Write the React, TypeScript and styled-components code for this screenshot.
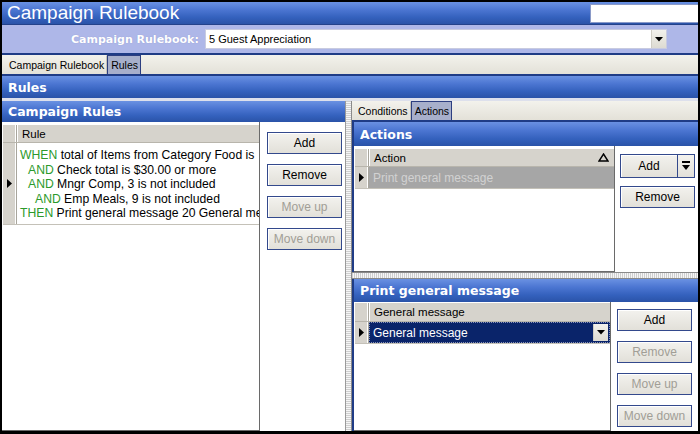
import React from 'react';
import styled, { createGlobalStyle } from 'styled-components';

const GlobalStyle = createGlobalStyle`
  html, body {
    margin: 0;
    padding: 0;
    background: #000;
  }
  * {
    box-sizing: border-box;
  }
`;

const Frame = styled.div`
  width: 700px;
  height: 434px;
  border: 2px solid #000;
  border-bottom-width: 3px;
  background: #fff;
  display: flex;
  flex-direction: column;
  overflow: hidden;
  font-family: 'Liberation Sans', Arial, sans-serif;
  font-size: 12px;
  color: #000;
`;

const blueBar = `
  background: linear-gradient(to bottom, #6a91e2 0%, #4c76d2 35%, #3461bd 70%, #2a53a8 100%);
  color: #fff;
`;

const TitleBar = styled.div`
  ${blueBar}
  height: 23px;
  display: flex;
  align-items: center;
  justify-content: space-between;
  padding-left: 5px;
  border-bottom: 1px solid #23428a;
`;

const TitleText = styled.span`
  font-size: 19px;
`;

const TitleBox = styled.div`
  width: 108px;
  height: 19px;
  background: #fff;
  border: 1px solid #8a9ac8;
  border-right: none;
`;

const LabelBand = styled.div`
  height: 30px;
  background: #aeb7e8;
  display: flex;
  align-items: center;
  padding-left: 69px;
  border-bottom: 2px solid #1f3c86;
`;

const BandLabel = styled.span`
  font-family: 'DejaVu Sans', Verdana, sans-serif;
  font-weight: bold;
  font-size: 11px;
  color: #fff;
  text-shadow: 0 0 1px #8a94c8;
  width: 134px;
`;

const Combo = styled.div`
  width: 462px;
  height: 20px;
  background: #fff;
  border: 1px solid #c8cbe0;
  display: flex;
  align-items: center;
  justify-content: space-between;
  padding-left: 3px;
  font-size: 11px;
`;

const DropButton = styled.div`
  width: 15px;
  height: 100%;
  background: linear-gradient(to bottom, #f2f1ec, #dddbd2);
  border-left: 1px solid #cfcdc4;
  display: flex;
  align-items: center;
  justify-content: center;
`;

const TabStrip = styled.div<{ $inset?: number }>`
  height: 21px;
  flex: 0 0 21px;
  background: linear-gradient(to bottom, #f3f2ec, #e3e1d8);
  display: flex;
  align-items: flex-end;
  padding-left: ${(p) => p.$inset ?? 3}px;
  border-bottom: 2px solid #1f3c86;
`;

const Tab = styled.div<{ $active?: boolean }>`
  height: 19px;
  display: flex;
  align-items: center;
  padding: 0 2px 0 3px;
  font-size: 10.5px;
  background: ${(p) => (p.$active ? '#a7afcb' : 'transparent')};
  border: 1px solid ${(p) => (p.$active ? '#2c3e80' : 'transparent')};
  border-bottom: none;
  border-right: 1px solid ${(p) => (p.$active ? '#2c3e80' : '#c4c2b8')};
`;

const SectionHeader = styled.div<{ $h: number }>`
  ${blueBar}
  height: ${(p) => p.$h}px;
  flex: 0 0 ${(p) => p.$h}px;
  display: flex;
  align-items: center;
  padding-left: 6px;
  font-family: 'DejaVu Sans', Verdana, sans-serif;
  font-weight: bold;
  font-size: 12.5px;
`;

const Body = styled.div`
  flex: 1;
  display: flex;
  min-height: 0;
  border-top: 3px solid #dde0ec;
`;

const LeftPane = styled.div`
  width: 344px;
  display: flex;
  flex-direction: column;
  border-right: 1px solid #9a9a9a;
`;

const VSplitter = styled.div`
  width: 6px;
  background: repeating-linear-gradient(to bottom, #cfcfcf 0 1px, #f6f6f6 1px 2px);
  border-right: 1px solid #8a8a8a;
`;

const HSplitter = styled.div`
  height: 7px;
  flex: 0 0 7px;
  background: repeating-linear-gradient(to right, #cfcfcf 0 1px, #f6f6f6 1px 2px);
  border-top: 1px solid #8a8a8a;
  border-bottom: 1px solid #8a8a8a;
`;

const RightPane = styled.div`
  flex: 1;
  display: flex;
  flex-direction: column;
  min-width: 0;
`;

const Panel = styled.div<{ $grow?: boolean; $h?: number }>`
  display: flex;
  flex-direction: column;
  border-left: 2px solid #1f3c86;
  ${(p) => (p.$grow ? 'flex: 1;' : `flex: 0 0 ${p.$h}px;`)}
  min-height: 0;
`;

const Content = styled.div`
  flex: 1;
  display: flex;
  background: #fff;
  min-height: 0;
`;

const Grid = styled.div<{ $w: number; $top: number }>`
  width: ${(p) => p.$w}px;
  display: flex;
  flex-direction: column;
  border-right: 1px solid #6a6a6a;
  border-bottom: 1px solid #6a6a6a;
  padding: ${(p) => p.$top}px 0 0 1px;
  overflow: hidden;
`;

const GridHead = styled.div<{ $h: number }>`
  height: ${(p) => p.$h}px;
  flex: 0 0 ${(p) => p.$h}px;
  display: flex;
  background: #d6d3cc;
  border-bottom: 1px solid #b8b5ac;
`;

const Selector = styled.div`
  width: 14px;
  flex: 0 0 14px;
  background: #d6d3cc;
  border-right: 1px solid #a8a59c;
  box-shadow: inset -1px 0 0 #fff;
  display: flex;
  align-items: center;
  justify-content: center;
`;

const HeadCell = styled.div`
  flex: 1;
  display: flex;
  align-items: center;
  justify-content: space-between;
  padding: 0 5px 0 4px;
  font-size: 11.5px;
  border-left: 1px solid #fff;
`;

const Row = styled.div<{ $bg?: string; $color?: string }>`
  display: flex;
  background: ${(p) => p.$bg ?? '#fff'};
  color: ${(p) => p.$color ?? '#000'};
  border-bottom: 1px solid #c4c1b8;
`;

const RuleText = styled.div`
  flex: 1;
  padding: 5px 0 3px 3px;
  line-height: 14.5px;
  font-size: 12.2px;
  white-space: nowrap;
  overflow: hidden;
`;

const RuleLine = styled.div<{ $indent: number }>`
  padding-left: ${(p) => p.$indent}px;
`;

const Keyword = styled.span`
  color: #2c9a2c;
`;

const CellText = styled.div<{ $outline?: boolean }>`
  flex: 1;
  display: flex;
  align-items: center;
  justify-content: space-between;
  padding-left: 4px;
  font-size: 12px;
  height: 21px;
  ${(p) => (p.$outline ? 'outline: 1px dotted #8a94b8; outline-offset: -1px;' : '')}
`;

const CellDrop = styled(DropButton)`
  height: 17px;
  margin-right: 2px;
`;

const Buttons = styled.div<{ $pad: number; $top: number }>`
  display: flex;
  flex-direction: column;
  gap: 10px;
  padding: ${(p) => p.$top}px 0 0 ${(p) => p.$pad}px;
`;

const Button = styled.div<{ $disabled?: boolean }>`
  width: 75px;
  height: 22px;
  display: flex;
  align-items: center;
  justify-content: center;
  font-size: 12px;
  white-space: nowrap;
  color: ${(p) => (p.$disabled ? '#a19e96' : '#000')};
  background: linear-gradient(to bottom, #f3f2ee, #e2e0d9);
  border: 1px solid #33498c;
  box-shadow: inset 1px 1px 0 #fff;
`;

const SplitButton = styled.div`
  width: 75px;
  height: 24px;
  display: flex;
  border: 1px solid #33498c;
  background: linear-gradient(to bottom, #f3f2ee, #e2e0d9);
  margin-bottom: -2px;
`;

const SplitMain = styled.div`
  flex: 1;
  display: flex;
  align-items: center;
  justify-content: center;
  font-size: 12px;
  border-right: 1px solid #33498c;
  box-shadow: inset 1px 1px 0 #fff;
`;

const SplitArrow = styled.div`
  width: 16px;
  display: flex;
  align-items: center;
  justify-content: center;
`;

const Arrow = () => (
  <svg width="5" height="9" viewBox="0 0 5 9">
    <path d="M0 0 L5 4.5 L0 9 Z" fill="#000" />
  </svg>
);

const DownTri = () => (
  <svg width="8" height="5" viewBox="0 0 8 5">
    <path d="M0 0 H8 L4 4.5 Z" fill="#000" />
  </svg>
);

const DropArrow = () => (
  <svg width="10" height="12" viewBox="0 0 10 12">
    <rect x="1" y="1" width="8" height="2" fill="#000" />
    <path d="M1 5 H9 L5 10 Z" fill="#000" />
  </svg>
);

const SortGlyph = () => (
  <svg width="11" height="9" viewBox="0 0 11 9">
    <path d="M5.5 1 L10 8 H1 Z" fill="none" stroke="#000" strokeWidth="1.4" />
  </svg>
);

export default function App() {
  return (
    <>
      <GlobalStyle />
      <Frame>
        <TitleBar>
          <TitleText>Campaign Rulebook</TitleText>
          <TitleBox />
        </TitleBar>
        <LabelBand>
          <BandLabel>Campaign Rulebook:</BandLabel>
          <Combo>
            <span>5 Guest Appreciation</span>
            <DropButton>
              <DownTri />
            </DropButton>
          </Combo>
        </LabelBand>
        <TabStrip>
          <Tab>Campaign Rulebook</Tab>
          <Tab $active>Rules</Tab>
        </TabStrip>
        <SectionHeader $h={22}>Rules</SectionHeader>
        <Body>
          <LeftPane>
            <SectionHeader $h={21}>Campaign Rules</SectionHeader>
            <Content>
              <Grid $w={258} $top={3}>
                <GridHead $h={18}>
                  <Selector />
                  <HeadCell>Rule</HeadCell>
                </GridHead>
                <Row>
                  <Selector>
                    <Arrow />
                  </Selector>
                  <RuleText>
                    <RuleLine $indent={0}>
                      <Keyword>WHEN</Keyword> total of Items from Category Food is
                    </RuleLine>
                    <RuleLine $indent={8}>
                      <Keyword>AND</Keyword> Check total is $30.00 or more
                    </RuleLine>
                    <RuleLine $indent={8}>
                      <Keyword>AND</Keyword> Mngr Comp, 3 is not included
                    </RuleLine>
                    <RuleLine $indent={15}>
                      <Keyword>AND</Keyword> Emp Meals, 9 is not included
                    </RuleLine>
                    <RuleLine $indent={0}>
                      <Keyword>THEN</Keyword> Print general message 20 General mes
                    </RuleLine>
                  </RuleText>
                </Row>
              </Grid>
              <Buttons $pad={7} $top={10}>
                <Button>Add</Button>
                <Button>Remove</Button>
                <Button $disabled>Move up</Button>
                <Button $disabled>Move down</Button>
              </Buttons>
            </Content>
          </LeftPane>
          <VSplitter />
          <RightPane>
            <TabStrip $inset={2}>
              <Tab>Conditions</Tab>
              <Tab $active>Actions</Tab>
            </TabStrip>
            <Panel $h={150}>
              <SectionHeader $h={24}>Actions</SectionHeader>
              <Content>
                <Grid $w={261} $top={3}>
                  <GridHead $h={18}>
                    <Selector />
                    <HeadCell>
                      Action
                      <SortGlyph />
                    </HeadCell>
                  </GridHead>
                  <Row $bg="#a6a6a6" $color="#d2d2d2">
                    <Selector>
                      <Arrow />
                    </Selector>
                    <CellText>Print general message</CellText>
                  </Row>
                </Grid>
                <Buttons $pad={5} $top={8}>
                  <SplitButton>
                    <SplitMain>Add</SplitMain>
                    <SplitArrow>
                      <DropArrow />
                    </SplitArrow>
                  </SplitButton>
                  <Button>Remove</Button>
                </Buttons>
              </Content>
            </Panel>
            <HSplitter />
            <Panel $grow>
              <SectionHeader $h={23}>Print general message</SectionHeader>
              <Content>
                <Grid $w={257} $top={1}>
                  <GridHead $h={19}>
                    <Selector />
                    <HeadCell>General message</HeadCell>
                  </GridHead>
                  <Row $bg="#0a246a" $color="#fff">
                    <Selector>
                      <Arrow />
                    </Selector>
                    <CellText $outline>
                      General message
                      <CellDrop>
                        <DownTri />
                      </CellDrop>
                    </CellText>
                  </Row>
                </Grid>
                <Buttons $pad={6} $top={7}>
                  <Button>Add</Button>
                  <Button $disabled>Remove</Button>
                  <Button $disabled>Move up</Button>
                  <Button $disabled>Move down</Button>
                </Buttons>
              </Content>
            </Panel>
          </RightPane>
        </Body>
      </Frame>
    </>
  );
}
